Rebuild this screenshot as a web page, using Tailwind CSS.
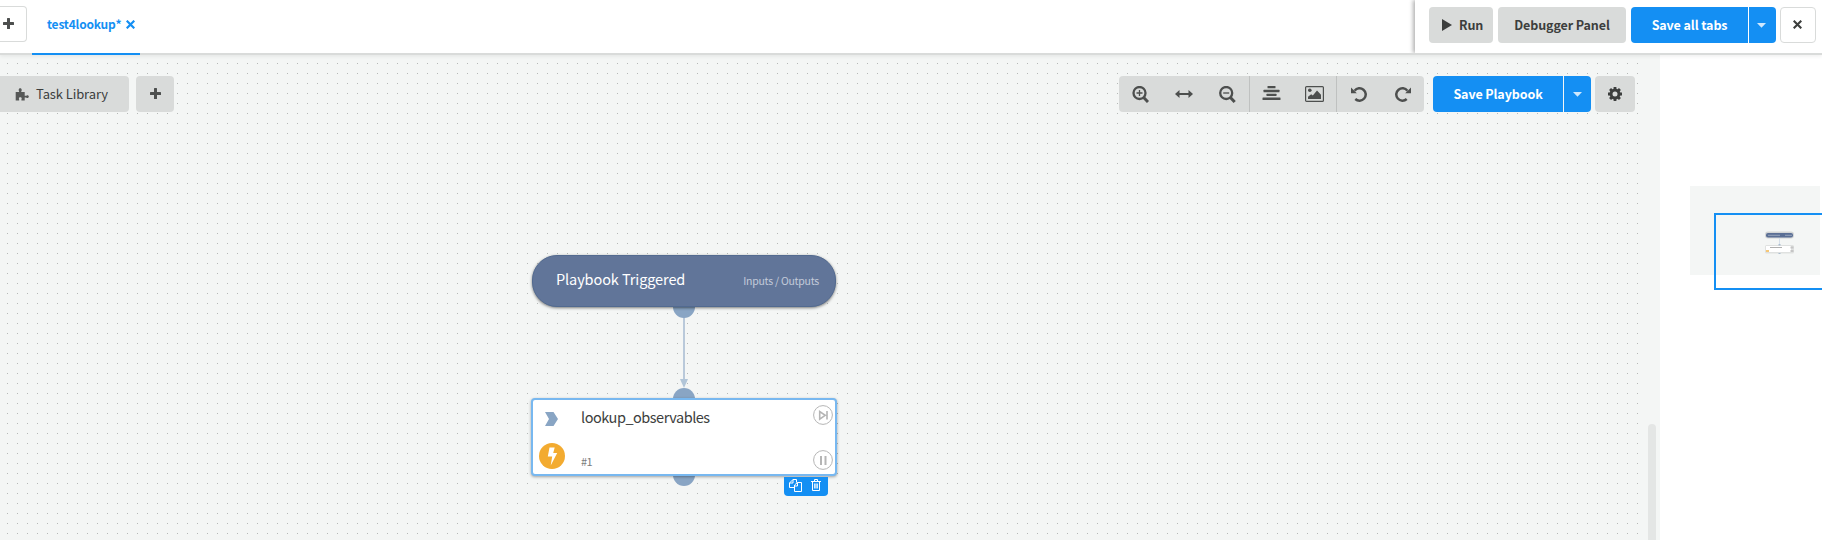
<!DOCTYPE html>
<html lang="en">
<head>
<meta charset="utf-8">
<title>Playbook editor</title>
<script src="https://cdn.jsdelivr.net/npm/@tailwindcss/browser@4"></script>
</head>
<body class="w-[1822px] h-[540px] overflow-hidden bg-white flex flex-col font-['Noto_Sans_CJK_SC','Noto_Sans',sans-serif] text-[#3c3e3d] leading-5 whitespace-nowrap">
<header class="relative z-10 flex h-[55px] shrink-0 border-b-2 border-[#d9dbda] bg-white shadow-[0_1px_4px_rgba(0,0,0,0.08)]">
  <button class="mt-1.5 h-9 w-[27px] shrink-0 rounded-r border border-l-0 border-[#d9dbda] flex items-center pl-[3px] pb-px">
    <svg class="w-[11px] h-[11px]" viewBox="0 0 11 11" fill="#4d4f4e"><rect x="4" width="3" height="11" rx=".5"/><rect y="4" width="11" height="3" rx=".5"/></svg>
  </button>
  <div class="ml-[5px] w-[108px] h-[55px] border-b-2 border-[#148ff3] flex items-center gap-[7px] pl-[15px] pb-[5px] text-[#148ff3]">
    <span class="w-[72px] text-[12px] font-bold tracking-[-0.2px]">test4lookup*</span>
    <svg class="w-[9px] h-[9px]" viewBox="0 0 9 9" stroke="#148ff3" stroke-width="2.2"><path d="M.7.7l7.6 7.6M8.3.7L.7 8.3"/></svg>
  </div>
  <div class="ml-auto w-[407px] h-[53px] flex items-start pt-[7px] pl-3.5 bg-white shadow-[-2px_0_4px_rgba(0,0,0,0.3)] text-[12.5px] tracking-[-0.1px] font-bold [clip-path:inset(0_0_0_-10px)]">
    <button class="w-16 h-9 rounded bg-[#d9dbda] flex items-center pl-[13px] gap-[7px]">
      <svg class="w-[10px] h-[12px]" viewBox="0 0 10 12" fill="#3c3e3d"><path d="M0 0l10 6L0 12z"/></svg><span>Run</span>
    </button>
    <button class="ml-[5px] w-32 h-9 rounded bg-[#d9dbda]">Debugger Panel</button>
    <button class="ml-[5px] w-[117px] h-9 rounded-l bg-[#148ff3] text-white">Save all tabs</button>
    <button class="ml-px w-[27px] h-9 rounded-r bg-[#148ff3] flex items-center justify-center pr-0.5"><svg class="w-[9px] h-[5px]" viewBox="0 0 9 5" fill="#cfe8fd"><path d="M0 0h9L4.500 4.700z"/></svg></button>
    <button class="ml-1 w-9 h-9 rounded border border-[#d9dbda] bg-white flex items-center justify-center pr-0.5 pb-px"><svg class="w-[9px] h-[9px]" viewBox="0 0 9 9" stroke="#3c3e3d" stroke-width="2.1"><path d="M.7.7l7.6 7.6M8.3.7L.7 8.3"/></svg></button>
  </div>
</header>
<main class="flex flex-1">
  <section class="relative w-[1660px] bg-[#f4f6f5]">
    <svg class="absolute left-0 top-0 w-[1640px] h-[485px]" shape-rendering="crispEdges"><defs><pattern id="dots" width="10" height="10" patternUnits="userSpaceOnUse"><rect x="7" y="8" width="1" height="1" fill="#b5b8b6"/></pattern></defs><rect width="1640" height="485" fill="url(#dots)"/></svg>
    <div class="relative flex pt-[21px] text-[12.5px] tracking-[-0.1px]">
      <button class="w-[129px] h-9 rounded-r bg-[#d9dbda] flex items-center pl-[15px] gap-[7px]">
        <svg class="w-3.5 h-[13px]" viewBox="0 0 14 13" fill="#565857"><path d="M.7 4h3.400c.3-.5-.4-1-.4-2C3.700.8 4.300.2 5.200.2s1.500.6 1.500 1.800c0 1-.7 1.500-.4 2h3.400v3.800h1.500c.3-.4.7-.6 1.200-.6.900 0 1.400.6 1.400 1.400s-.5 1.500-1.400 1.500c-.5 0-.9-.3-1.200-.7H9.700V12.500H6.500c-.4-.8.200-1.200.2-2 0-.7-.6-1.200-1.400-1.200s-1.400.5-1.400 1.200c0 .8.600 1.200.2 2H.7z"/></svg>
        <span class="text-[13px]">Task Library</span>
      </button>
      <button class="ml-[7px] w-[38px] h-9 rounded bg-[#d9dbda] flex items-center justify-center pb-px"><svg class="w-[11px] h-[11px]" viewBox="0 0 11 11" fill="#4d4f4e"><rect x="4" width="3" height="11" rx=".5"/><rect y="4" width="11" height="3" rx=".5"/></svg></button>
      <div class="ml-[945px] w-[305px] h-9 rounded bg-[#d9dbda] flex text-[#4d4f4e]">
        <div class="w-[131px] border-r border-[#bfc1c0] flex items-center pl-[13px] gap-[26px]">
          <svg class="w-[17px] h-[17px]" viewBox="0 0 17 17" fill="none" stroke="currentColor" stroke-width="2.300"><circle cx="7.500" cy="7" r="6"/><path d="M11.700 11.500l4.300 4.500" stroke-width="3"/><path d="M4.500 7h6M7.500 4v6" stroke-width="1.300"/></svg>
          <svg class="w-[18px] h-[8px]" viewBox="0 0 18 8" fill="currentColor"><path d="M0 4l4.500-4v2.900h9V0L18 4l-4.500 4V5.100h-9V8z"/></svg>
          <svg class="w-[17px] h-[17px]" viewBox="0 0 17 17" fill="none" stroke="currentColor" stroke-width="2.300"><circle cx="7.200" cy="7" r="6"/><path d="M11.400 11.500l4.300 4.500" stroke-width="3"/><path d="M4.200 7h6" stroke-width="1.300"/></svg>
        </div>
        <div class="w-[87px] border-r border-[#bfc1c0] flex items-center pl-3 gap-6">
          <svg class="w-[19px] h-[14px] mb-0.5" viewBox="0 0 19 14" fill="currentColor"><rect x="5.500" y="0" width="8" height="2.300" rx=".5"/><rect x="1.500" y="3.800" width="16" height="2.400" rx=".5"/><rect x="4.500" y="7.700" width="10" height="2.400" rx=".5"/><rect x=".5" y="11.600" width="18" height="2.400" rx=".5"/></svg>
          <svg class="w-[19px] h-[16px]" viewBox="0 0 19 16"><rect x=".6" y=".6" width="17.800" height="14.800" rx="1" fill="none" stroke="currentColor" stroke-width="1.200"/><circle cx="4.800" cy="4.200" r="1.800" fill="currentColor"/><path d="M3 13v-2.200l3.200-2.600 1.600 1.200L12 4.500l4 4.300V13z" fill="currentColor"/></svg>
        </div>
        <div class="flex items-center pl-[14px] gap-7">
          <svg class="w-4 h-[15px]" viewBox="0 0 16 15"><path d="M3.600 3.700A6.200 6.200 0 1 1 4.300 12" fill="none" stroke="currentColor" stroke-width="2.500"/><path d="M0 .5v5.800h5.800z" fill="currentColor"/></svg>
          <svg class="w-4 h-[15px]" viewBox="0 0 16 15"><path d="M12.400 3.700A6.200 6.200 0 1 0 11.700 12" fill="none" stroke="currentColor" stroke-width="2.500"/><path d="M16 .5v5.800h-5.800z" fill="currentColor"/></svg>
        </div>
      </div>
      <button class="ml-[9px] w-[130px] h-9 rounded-l bg-[#148ff3] text-white font-bold">Save Playbook</button>
      <button class="ml-px w-[27px] h-9 rounded-r bg-[#148ff3] flex items-center justify-center"><svg class="w-[9px] h-[5px]" viewBox="0 0 9 5" fill="#cfe8fd"><path d="M0 0h9L4.500 4.700z"/></svg></button>
      <button class="ml-1 w-10 h-9 rounded bg-[#d9dbda] flex items-center justify-center"><svg class="w-3.5 h-3.5" viewBox="0 0 14 14" fill="none" stroke="#3c3e3d"><circle cx="7" cy="7" r="4" stroke-width="3"/><path d="M7 0v2M7 12v2M0 7h2M12 7h2M2.050 2.050l1.500 1.500M10.450 10.450l1.500 1.500M11.950 2.050l-1.500 1.500M2.050 11.950l1.500-1.500" stroke-width="2.800"/></svg></button>
    </div>

    <svg class="absolute left-[672px] top-[240px] w-6 h-[200px]" viewBox="0 0 24 200"><path d="M12 15v70" stroke="#b9c9da" stroke-width="2"/><path d="M8 84h8l-4 9z" fill="#b1c5d8"/><circle cx="12" cy="12" r="11" fill="#89a5c4"/><circle cx="12" cy="104" r="11" fill="#89a5c4"/><circle cx="12" cy="180" r="11" fill="#89a5c4"/></svg>

    <div class="absolute left-[532px] top-[200px] w-[304px] h-[52px] rounded-[25px] border border-[#526a90] bg-[#617599] shadow-[0_1px_3px_rgba(0,0,0,0.5)] flex items-center justify-between pl-[23px] pr-4">
      <span class="text-[14.5px] tracking-[-0.1px] text-white mb-1">Playbook Triggered</span>
      <span class="text-[10.5px] tracking-[-0.24px] text-[#c3cbd9]">Inputs / Outputs</span>
    </div>

    <div class="absolute left-[531px] top-[343px] w-[306px] h-[78px] rounded border-2 border-[#78b8f0] bg-white shadow-[0_1px_3px_rgba(0,0,0,0.35)] flex">
      <div class="w-[48px] flex flex-col items-center pr-[11px]">
        <svg class="mt-3 w-[13px] h-[14px]" viewBox="0 0 13 14" fill="#89a5c4"><path d="M0 0h8.500L13 7l-4.500 7H0l4-7z"/></svg>
        <svg class="mt-[17px] w-[26px] h-[26px]" viewBox="0 0 26 26"><circle cx="13" cy="13" r="13" fill="#f3ab30"/><path d="M10.500 4.500h5.200l-1.500 5.500h4L11.700 22.500l1.500-9H8.800z" fill="#fff"/></svg>
      </div>
      <div class="flex-1 flex flex-col justify-between pt-[7px] pb-[3px]">
        <span class="text-[14.5px] tracking-[-0.48px]">lookup_observables</span>
        <span class="text-[11px] text-[#7b7d7c] tracking-[-0.5px]">#1</span>
      </div>
      <div class="w-[22px] flex flex-col justify-between pt-[5px] pb-1">
        <svg class="w-5 h-5" viewBox="0 0 20 20" fill="none" stroke="#b5b5b5"><circle cx="10" cy="10" r="9.400"/><path d="M6.700 6.500v7.600l5.500-3.800zM14 6v8.500" stroke-width="1.600"/></svg>
        <svg class="w-5 h-5" viewBox="0 0 20 20" fill="none" stroke="#b5b5b5"><circle cx="10" cy="10" r="9.400"/><path d="M8 6v9M12.500 6v9" stroke-width="2"/></svg>
      </div>
    </div>
    <div class="absolute left-[784px] top-[422px] w-11 h-[19px] rounded-b-sm bg-[#148ff3] flex pl-[5px] pt-[2px] gap-[9px]">
      <svg class="w-[13px] h-[13px]" viewBox="0 0 13 13" fill="none" stroke="#fff"><path d="M5 8.500H.5V4L4 .5h3.500v3M4 .5V4H.5M5.500 12.500V6L8.500 3.500h4v9zM8.500 3.500V7h-3"/></svg>
      <svg class="w-[10px] h-[12px]" viewBox="0 0 10 12" fill="none" stroke="#fff"><path d="M0 2.500h10M3.500 2V.5h3V2M1.500 2.500v9h7v-9M3.700 4.500v5M5 4.500v5M6.300 4.500v5"/></svg>
    </div>
    <div class="absolute left-[1648px] top-[369px] w-2 h-[130px] rounded-full bg-[#e4e6e5]"></div>
  </section>
  <aside class="relative w-[162px] overflow-hidden">
    <div class="mt-[131px] ml-[30px] w-[130px] h-[89px] bg-[#f4f6f5]"></div>
    <svg class="absolute left-[104px] top-[174px] w-[32px] h-[28px]" viewBox="0 0 32 28"><rect x="1" y="2.500" width="29" height="7" rx="3" fill="#d4d6d6"/><rect x="2" y="4" width="27" height="4.500" rx="2" fill="#5b6f95"/><path d="M4 6.300h12M21 6.300h7" stroke="#98a5bc"/><path d="M15.500 9v8" stroke="#d5dfea"/><rect x="1" y="16" width="29" height="8.500" rx="1.500" fill="#dfe1e0"/><rect x="2" y="17" width="25" height="6" fill="#fff"/><path d="M6 18.500h12" stroke="#b0b0b0"/><path d="M26.500 18.500h3M26.500 22h3" stroke="#c5c5c5" stroke-width="2"/><rect x="2" y="21" width="3" height="2" fill="#f6c878"/><rect x="14.500" y="15" width="2" height="1.500" fill="#a9bccf"/><rect x="14.500" y="24" width="2" height="1" fill="#a9bccf"/></svg>
    <div class="absolute left-[54px] top-[158px] w-[130px] h-[77px] border-2 border-[#148ff3]"></div>
  </aside>
</main>
</body>
</html>
